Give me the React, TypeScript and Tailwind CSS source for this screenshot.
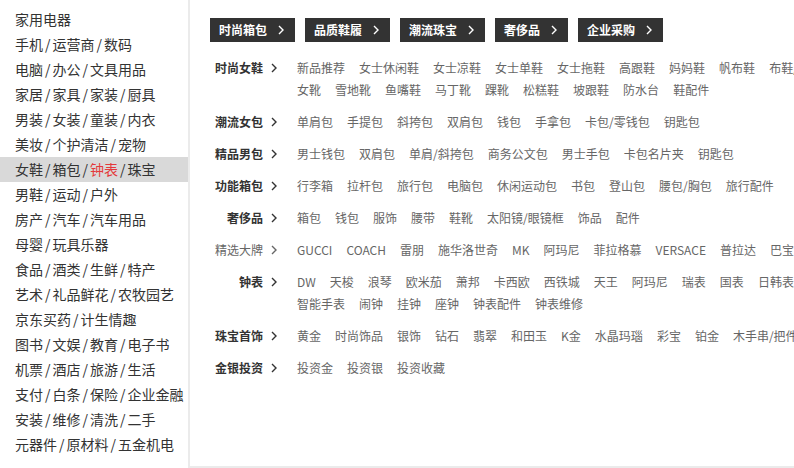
import React from 'react';

const sideRows: string[][] = [
  ['家用电器'],
  ['手机', '运营商', '数码'],
  ['电脑', '办公', '文具用品'],
  ['家居', '家具', '家装', '厨具'],
  ['男装', '女装', '童装', '内衣'],
  ['美妆', '个护清洁', '宠物'],
  ['女鞋', '箱包', '钟表', '珠宝'],
  ['男鞋', '运动', '户外'],
  ['房产', '汽车', '汽车用品'],
  ['母婴', '玩具乐器'],
  ['食品', '酒类', '生鲜', '特产'],
  ['艺术', '礼品鲜花', '农牧园艺'],
  ['京东买药', '计生情趣'],
  ['图书', '文娱', '教育', '电子书'],
  ['机票', '酒店', '旅游', '生活'],
  ['支付', '白条', '保险', '企业金融'],
  ['安装', '维修', '清洗', '二手'],
  ['元器件', '原材料', '五金机电'],
];

const tabs = ['时尚箱包', '品质鞋履', '潮流珠宝', '奢侈品', '企业采购'];

const groups: { title: string; strong: boolean; items: string[] }[] = [
  {
    title: '时尚女鞋',
    strong: true,
    items: ['新品推荐', '女士休闲鞋', '女士凉鞋', '女士单鞋', '女士拖鞋', '高跟鞋', '妈妈鞋', '帆布鞋', '布鞋/绣花鞋', '女靴', '雪地靴', '鱼嘴鞋', '马丁靴', '踝靴', '松糕鞋', '坡跟鞋', '防水台', '鞋配件'],
  },
  { title: '潮流女包', strong: true, items: ['单肩包', '手提包', '斜挎包', '双肩包', '钱包', '手拿包', '卡包/零钱包', '钥匙包'] },
  { title: '精品男包', strong: true, items: ['男士钱包', '双肩包', '单肩/斜挎包', '商务公文包', '男士手包', '卡包名片夹', '钥匙包'] },
  { title: '功能箱包', strong: true, items: ['行李箱', '拉杆包', '旅行包', '电脑包', '休闲运动包', '书包', '登山包', '腰包/胸包', '旅行配件'] },
  { title: '奢侈品', strong: true, items: ['箱包', '钱包', '服饰', '腰带', '鞋靴', '太阳镜/眼镜框', '饰品', '配件'] },
  { title: '精选大牌', strong: false, items: ['GUCCI', 'COACH', '雷朋', '施华洛世奇', 'MK', '阿玛尼', '菲拉格慕', 'VERSACE', '普拉达', '巴宝莉'] },
  {
    title: '钟表',
    strong: true,
    items: ['DW', '天梭', '浪琴', '欧米茄', '萧邦', '卡西欧', '西铁城', '天王', '阿玛尼', '瑞表', '国表', '日韩表', '智能手表', '闹钟', '挂钟', '座钟', '钟表配件', '钟表维修'],
  },
  { title: '珠宝首饰', strong: true, items: ['黄金', '时尚饰品', '银饰', '钻石', '翡翠', '和田玉', 'K金', '水晶玛瑙', '彩宝', '铂金', '木手串/把件'] },
  { title: '金银投资', strong: true, items: ['投资金', '投资银', '投资收藏'] },
];

const Chevron = ({ className }: { className: string }) => (
  <svg viewBox="0 0 6 10" className={className} fill="none" stroke="currentColor" strokeWidth="1.4">
    <path d="M1 1l4 4-4 4" />
  </svg>
);

export default function App() {
  return (
    <div
      className="w-[794px] h-[468px] overflow-hidden flex bg-white"
      style={{ fontFamily: '"Microsoft YaHei", "Noto Sans CJK SC", "Noto Sans", sans-serif' }}
    >
      <ul className="w-[188px] shrink-0 pt-[7px] text-[14px] text-[#333]">
        {sideRows.map((row, i) => (
          <li key={i} className={`h-[25px] leading-[25px] pl-[15px] ${i === 6 ? 'bg-[#d9d9d9]' : ''}`}>
            {row.map((w, j) => (
              <React.Fragment key={w}>
                {j > 0 && <span className="mx-[2px]">/</span>}
                <span className={w === '钟表' ? 'text-[#e4393c]' : ''}>{w}</span>
              </React.Fragment>
            ))}
          </li>
        ))}
      </ul>

      <div className="w-[620px] shrink-0 h-[468px] border-l-2 border-b-2 border-[#ebebeb] pl-[20px] pt-[18px]">
        <div className="flex gap-[10px]">
          {tabs.map((t) => (
            <div key={t} className="h-[24px] flex items-center bg-[#333] text-white text-[12px] font-bold pl-[9px] pr-[11px]">
              <span>{t}</span>
              <Chevron className="w-[6px] h-[10px] ml-[11px]" />
            </div>
          ))}
        </div>

        <div className="mt-[10px]">
          {groups.map((g) => (
            <dl key={g.title} className="flex py-[5px] text-[12px]">
              <dt
                className={`w-[67px] shrink-0 h-[22px] flex items-center justify-end gap-[8px] ${
                  g.strong ? 'font-bold text-[#333]' : 'text-[#666]'
                }`}
              >
                <span>{g.title}</span>
                <Chevron className="w-[6px] h-[10px]" />
              </dt>
              <dd className="ml-[20px] w-[555px] shrink-0 flex flex-wrap gap-x-[14px] text-[#666]">
                {g.items.map((it) => (
                  <span key={it} className="leading-[22px] whitespace-nowrap">
                    {it}
                  </span>
                ))}
              </dd>
            </dl>
          ))}
        </div>
      </div>
    </div>
  );
}
